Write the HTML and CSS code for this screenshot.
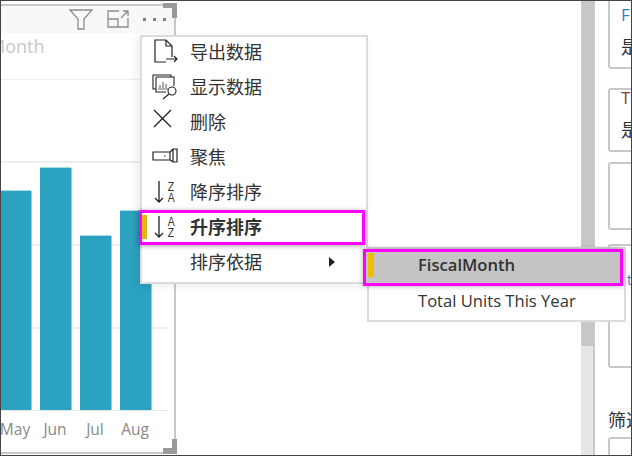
FILE: index.html
```html
<!DOCTYPE html>
<html lang="zh-CN">
<head>
    <meta charset="UTF-8">
    <title>排序依据</title>
    <link rel="stylesheet" href="styles.css">
</head>
<body>
    <div class="screen">
        <!-- Visual with the bar chart -->
        <section class="visual">
            <div class="visual-head">
                <svg class="icon-filter" width="24" height="21" viewBox="0 0 24 21" fill="none" stroke="#8c8c8c" stroke-width="1.3">
                    <path d="M1 1H23L15 10V20H9V10Z"/>
                </svg>
                <svg class="icon-expand" width="22" height="18" viewBox="0 0 22 18" fill="none" stroke="#8c8c8c" stroke-width="1.3">
                    <path d="M12 1H1V17H21V8M1 9H11V17M14 8L21 1M16 1H21V6"/>
                </svg>
                <div class="dots"><span></span><span></span><span></span></div>
            </div>
            <div class="chart-title">Month</div>
            <div class="chart">
                <div class="bar bar-may"></div>
                <div class="bar bar-jun"></div>
                <div class="bar bar-jul"></div>
                <div class="bar bar-aug"></div>
            </div>
            <div class="axis">
                <span>May</span>
                <span>Jun</span>
                <span>Jul</span>
                <span>Aug</span>
            </div>
            <i class="corner corner-top"></i>
            <i class="corner corner-bottom"></i>
        </section>

        <div class="scrollbar"><div class="scroll-track"></div></div>

        <!-- Right hand panel, cut off by the window -->
        <aside class="panel">
            <div class="well well-first">
                <div class="well-label"><span class="c-blue">F</span><span class="c-orange">i</span></div>
                <div class="well-value">是</div>
            </div>
            <div class="well well-second">
                <div class="well-label"><span class="c-brown">T</span><span class="c-blue">o</span></div>
                <div class="well-value">是</div>
            </div>
            <div class="well well-empty"></div>
            <div class="well well-tall"><span class="c-blue">t</span></div>
            <div class="panel-title">筛选</div>
            <div class="well well-last"></div>
        </aside>

        <!-- Context menu -->
        <ul class="menu">
            <li class="menu-item">
                <svg class="menu-icon" width="28" height="28" viewBox="0 0 28 28" fill="none" stroke="#222" stroke-width="1.2">
                    <path d="M14 23H3V1H14L20 7V18M14 1V7H20M14 20H25M22 17L25 20L22 23"/>
                </svg>
                <span>导出数据</span>
            </li>
            <li class="menu-item">
                <svg class="menu-icon" width="28" height="28" viewBox="0 0 28 28" fill="none" stroke="#222" stroke-width="1.1">
                    <path d="M4 15H1V1H19V3M4 3H22V12M4 3V18H14"/>
                    <path d="M8 14V11M11 14V8M14 14V10M6 15H16" stroke="#666"/>
                    <circle cx="20" cy="17" r="4"/>
                    <path d="M17 20L11 25"/>
                </svg>
                <span>显示数据</span>
            </li>
            <li class="menu-item">
                <svg class="menu-icon" width="28" height="28" viewBox="0 0 28 28" fill="none" stroke="#222" stroke-width="1.3">
                    <path d="M2 1L19 18M19 1L2 18"/>
                </svg>
                <span>删除</span>
            </li>
            <li class="menu-item">
                <svg class="menu-icon" width="28" height="28" viewBox="0 0 28 28" fill="none" stroke="#222" stroke-width="1.2">
                    <path d="M1 8H18V16H1ZM18 8L21 5H25V18H21L18 16M21 5V18"/>
                    <path d="M12 12H13.500"/>
                </svg>
                <span>聚焦</span>
            </li>
            <li class="menu-item">
                <svg class="menu-icon" width="28" height="28" viewBox="0 0 28 28" fill="none" stroke="#222" stroke-width="1.3">
                    <path d="M7 2V23M3 19L7 23L11 19"/>
                </svg>
                <span class="sort-glyph"><b>Z</b><b>A</b></span>
                <span>降序排序</span>
            </li>
            <li class="menu-item item-active">
                <i class="marker"></i>
                <svg class="menu-icon" width="28" height="28" viewBox="0 0 28 28" fill="none" stroke="#222" stroke-width="1.3">
                    <path d="M7 2V23M3 19L7 23L11 19"/>
                </svg>
                <span class="sort-glyph"><b>A</b><b>Z</b></span>
                <span>升序排序</span>
            </li>
            <li class="menu-item">
                <span>排序依据</span>
                <i class="arrow"></i>
            </li>
        </ul>

        <!-- Sub menu -->
        <ul class="submenu">
            <li class="sub-item sub-active"><i class="marker"></i>FiscalMonth</li>
            <li class="sub-item">Total Units This Year</li>
        </ul>
    </div>
</body>
</html>
```

FILE: styles.css
```css
* {
    box-sizing: border-box;
}
html, body {
    margin: 0;
    padding: 0;
}
body {
    font-family: "Open Sans", "Noto Sans CJK SC", sans-serif;
    background-color: #fff;
}
.screen {
    position: relative;
    display: flex;
    width: 632px;
    height: 456px;
    overflow: hidden;
    background-color: #fff;
    border: 1px solid #444;
}

/* Visual */
.visual {
    position: relative;
    flex: none;
    width: 175px;
    height: 450px;
    margin-top: 3px;
    border-top: 2px solid #c8c8c8;
    border-right: 2px solid #c8c8c8;
    border-bottom: 2px solid #c8c8c8;
    background-color: #fff;
}
.visual-head {
    position: relative;
    height: 27px;
    background-color: #f8f8f8;
}
.icon-filter,
.icon-expand,
.dots {
    position: absolute;
}
.icon-filter {
    left: 68px;
    top: 3px;
}
.icon-expand {
    left: 106px;
    top: 4px;
}
.dots {
    left: 142px;
    top: 12px;
    display: flex;
    gap: 7px;
}
.dots span {
    width: 3px;
    height: 3px;
    background-color: #808080;
}
.chart-title {
    height: 47px;
    padding-top: 1px;
    margin-left: -12px;
    font-size: 18px;
    line-height: 24px;
    color: #c8c8c8;
    border-bottom: 1px solid #eee;
}
.chart {
    display: flex;
    align-items: flex-end;
    gap: 9px;
    height: 331px;
    margin-right: 6px;
    margin-left: -1px;
    border-bottom: 1px solid #e8e8e8;
    /* horizontal gridlines behind the bars */
    background-image: repeating-linear-gradient(to bottom, transparent 0, transparent 81px, #eee 81px, #eee 83px);
}
.bar {
    flex: none;
    width: 31px;
    background-color: #2ba2bf;
    box-shadow: 1px 0 0 #8fd0e0, 0 -1px 0 #a8dbe7;
}
.bar-may { height: 219px; }
.bar-jun { height: 242px; }
.bar-jul { height: 174px; }
.bar-aug { height: 199px; }
.axis {
    display: flex;
    margin-left: -6px;
    padding-top: 7px;
    font-size: 15.500px;
    color: #888;
}
.axis span {
    width: 40px;
    text-align: center;
}
.corner {
    position: absolute;
    right: -3px;
    width: 14px;
    height: 15px;
    border-right: 5px solid #999;
}
.corner-top {
    top: -3px;
    border-top: 5px solid #999;
}
.corner-bottom {
    bottom: -2px;
    border-bottom: 6px solid #999;
}

/* Scrollbar */
.scrollbar {
    flex: none;
    width: 14px;
    margin-left: 405px;
    background-color: #c8c8c8;
}
.scroll-track {
    height: 120px;
    margin-top: 345px;
    margin-right: 2px;
    background-color: #e6e6e6;
}

/* Panel */
.panel {
    flex: none;
    width: 23px;
    margin-left: 13px;
    font-size: 18px;
    color: #333;
}
.well {
    width: 60px;
    padding-left: 11px;
    border: 2px solid #c8c8c8;
    border-radius: 3px;
}
.well-first {
    height: 70px;
    margin-top: -2px;
    margin-bottom: 19px;
    padding-top: 6px;
}
.well-second {
    height: 64px;
    margin-bottom: 10px;
}
.well-label {
    height: 16px;
    font-size: 17px;
    line-height: 16px;
}
.well-value {
    margin-top: 13px;
    line-height: 22px;
}
.well-empty {
    height: 68px;
    margin-bottom: 14px;
}
.well-tall {
    height: 124px;
    padding-top: 26px;
    padding-left: 17px;
    font-size: 14px;
    line-height: 16px;
}
.panel-title {
    width: 60px;
    margin-top: 40px;
    margin-bottom: 5px;
    line-height: 24px;
}
.well-last {
    height: 40px;
}
.c-blue { color: #3a78c4; }
.c-orange { color: #d9822b; }
.c-brown { color: #8a3a2a; }

/* Context menu */
.menu {
    position: absolute;
    top: 34px;
    left: 139px;
    width: 228px;
    height: 249px;
    margin: 0;
    padding: 0;
    list-style: none;
    background-color: #fff;
    border: 2px solid #dcdcdc;
    box-shadow: -3px 2px 8px rgba(0, 0, 0, 0.08);
    font-size: 18px;
    color: #333;
}
.menu-item {
    position: relative;
    display: flex;
    align-items: center;
    height: 35px;
    padding-left: 48px;
    padding-bottom: 3px;
}
.menu-item:first-child {
    margin-top: -2px;
}
.menu-icon {
    position: absolute;
    left: 10px;
    top: 4px;
}
.sort-glyph {
    position: absolute;
    left: 25px;
    top: 6px;
    display: flex;
    flex-direction: column;
    font-family: "Liberation Sans", sans-serif;
    font-size: 13px;
    line-height: 11px;
    transform: scaleX(0.8);
}
.sort-glyph b {
    font-weight: normal;
}
.item-active {
    width: 226px;
    margin-left: -3px;
    padding-left: 51px;
    font-weight: bold;
    outline: 3px solid #ff00ff;
    outline-offset: -3px;
    box-shadow: 0 1px 5px rgba(0, 0, 0, 0.35);
    background-color: #fff;
}
.item-active .menu-icon {
    left: 13px;
}
.item-active .sort-glyph {
    left: 28px;
    font-weight: normal;
}
.marker {
    position: absolute;
    left: 3px;
    top: 5px;
    width: 5px;
    height: 24px;
    background-color: #e3b50f;
}
.arrow {
    margin-left: 67px;
    margin-top: 2px;
    width: 0;
    height: 0;
    border-left: 6px solid #222;
    border-top: 5px solid transparent;
    border-bottom: 5px solid transparent;
}

/* Sub menu */
.submenu {
    position: absolute;
    top: 246px;
    left: 366px;
    width: 259px;
    height: 75px;
    margin: 0;
    padding: 0;
    list-style: none;
    background-color: #fff;
    border: 2px solid #dcdcdc;
    font-size: 16.600px;
    color: #333;
}
.sub-item {
    position: relative;
    height: 35px;
    line-height: 29px;
    padding-left: 49px;
}
.sub-active {
    width: 260px;
    height: 37px;
    margin-left: -6px;
    padding-left: 55px;
    line-height: 31px;
    font-weight: 600;
    background-color: #c4c4c4;
    outline: 3px solid #ff00ff;
    outline-offset: -3px;
    box-shadow: 0 0 5px rgba(0, 0, 0, 0.35);
}
.sub-active .marker {
    left: 5px;
    top: 4px;
    width: 6px;
    background-color: #eebf00;
}
```
